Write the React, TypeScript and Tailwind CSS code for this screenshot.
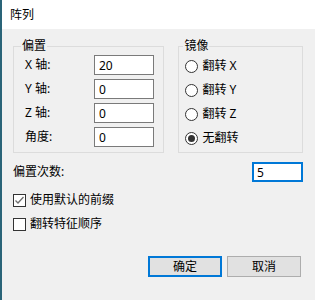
import React from "react";

const rows = [
  { label: "X 轴:", value: "20" },
  { label: "Y 轴:", value: "0" },
  { label: "Z 轴:", value: "0" },
  { label: "角度:", value: "0" },
];

const mirrors = ["翻转 X", "翻转 Y", "翻转 Z", "无翻转"];

function Radio({ checked }: { checked?: boolean }) {
  return (
    <span className="flex h-[13px] w-[13px] shrink-0 items-center justify-center rounded-full border border-[#333] bg-white">
      {checked && <span className="h-[7px] w-[7px] rounded-full bg-[#333]" />}
    </span>
  );
}

function Checkbox({ checked }: { checked?: boolean }) {
  return (
    <span className="flex h-[13px] w-[13px] shrink-0 items-center justify-center border border-[#333] bg-white">
      {checked && (
        <svg width="11" height="11" viewBox="0 0 11 11">
          <polyline points="1.5,5.5 4,8 9.5,2" fill="none" stroke="#6d6d6d" strokeWidth="1.3" />
        </svg>
      )}
    </span>
  );
}

export default function App() {
  return (
    <div className="flex h-[300px] w-[315px] flex-col border-l-2 border-[#2a6478] bg-[#f0f0f0] font-['Noto_Sans','Noto_Sans_CJK_SC',sans-serif] text-[12px] text-black">
      {/* title bar */}
      <div className="flex h-[29px] items-center bg-white pl-[8px] text-[12px]">阵列</div>

      <div className="flex flex-col pl-[11px] pr-[12px]">
        {/* group boxes */}
        <div className="mt-[10px] flex">
          <fieldset className="h-[114px] w-[152px] border border-[#dcdcdc] pt-[2px]">
            <legend className="ml-[7px] px-[1px] leading-[14px]">偏置</legend>
            <div className="flex flex-col gap-[4px]">
              {rows.map((r) => (
                <div key={r.label} className="flex h-[20px] items-center">
                  <span className="w-[80px] pl-[11px]">{r.label}</span>
                  <input
                    readOnly
                    value={r.value}
                    className="h-[20px] w-[60px] border border-[#7a7a7a] bg-white pl-[4px] text-[12px] outline-none"
                  />
                </div>
              ))}
            </div>
          </fieldset>

          <fieldset className="ml-[14px] h-[114px] w-[125px] border border-[#dcdcdc] pt-[1px]">
            <legend className="ml-[4px] px-[1px] leading-[14px]">镜像</legend>
            <div className="flex flex-col">
              {mirrors.map((m, i) => (
                <div key={m} className="flex h-[24px] items-center gap-[4px] pl-[6px]">
                  <Radio checked={i === 3} />
                  <span>{m}</span>
                </div>
              ))}
            </div>
          </fieldset>
        </div>

        {/* count */}
        <div className="mt-[9px] flex h-[20px] items-center justify-between">
          <span>偏置次数:</span>
          <input
            readOnly
            value="5"
            className="h-[20px] w-[51px] border-2 border-[#0078d7] bg-white pl-[3px] text-[12px] outline-none"
          />
        </div>

        <div className="mt-[6px] flex h-[24px] items-center gap-[4px]">
          <Checkbox checked />
          <span>使用默认的前缀</span>
        </div>
        <div className="flex h-[24px] items-center gap-[4px]">
          <Checkbox />
          <span>翻转特征顺序</span>
        </div>

        {/* buttons */}
        <div className="mt-[20px] mr-[2px] flex justify-end gap-[5px]">
          <button className="h-[21px] w-[74px] border-2 border-[#0078d7] bg-[#e1e1e1] text-[12px]">确定</button>
          <button className="h-[21px] w-[74px] border border-[#adadad] bg-[#e1e1e1] text-[12px]">取消</button>
        </div>
      </div>
    </div>
  );
}
